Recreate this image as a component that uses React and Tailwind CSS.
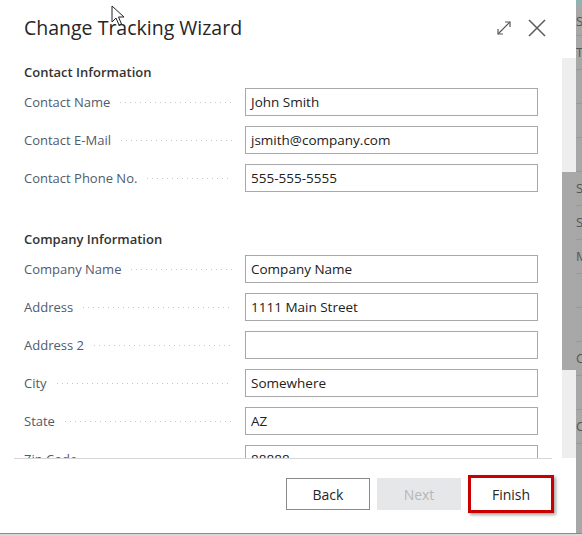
import React from "react";

const font = { fontFamily: '"Segoe UI", "Open Sans", "Noto Sans", sans-serif' };

function Row({ label, value }) {
  return (
    <div className="flex items-center h-[28px]">
      <div className="w-[221px] flex items-center pr-[13px] h-full">
        <span className="text-[13px] text-[#505b6c] whitespace-nowrap mt-[2px]">{label}</span>
        <span className="flex-1 ml-[10px] mt-[2px] h-[2px] bg-[linear-gradient(to_right,#c6c6c6_1px,transparent_1px)] bg-[length:5px_1px] bg-repeat-x"></span>
      </div>
      <div className="w-[293px] h-[28px] border border-[#a8a8a8] flex items-center pl-[5px] text-[13.5px] text-[#212121] whitespace-nowrap overflow-hidden">
        {value}
      </div>
    </div>
  );
}

function Section({ title, children, className = "" }) {
  return (
    <div className={"flex flex-col " + className}>
      <div className="h-[20px] flex items-center pt-[2px] text-[13px] font-semibold text-[#333333]">{title}</div>
      <div className="flex flex-col gap-[10px] mt-[6px]">{children}</div>
    </div>
  );
}

function Cursor() {
  return (
    <svg className="absolute left-[111px] top-[5px]" width="14" height="22" viewBox="0 0 14 22">
      <path d="M1 1 L1 17 L5 13 L8 20 L10.5 19 L7.5 12 L13 12 Z" fill="#fff" stroke="#222" strokeWidth="1" strokeLinejoin="round" />
    </svg>
  );
}

export default function App() {
  return (
    <div className="relative w-[582px] h-[536px] bg-[#a4a4a4] overflow-hidden flex flex-col" style={font}>
      <div className="flex h-[533px]">
        <div className="w-[576px] h-full bg-white flex flex-col">
          {/* header */}
          <div className="h-[58px] flex items-start pl-[24px] pr-[30px] pt-[14px]">
            <div className="flex-1 text-[19.5px] leading-[28px] text-[#262626] font-medium">Change Tracking Wizard</div>
            <div className="flex items-center gap-[16px] pt-[5px]">
              <svg width="16" height="16" viewBox="0 0 16 16" fill="none" stroke="#5a5a5a" strokeWidth="1.2">
                <path d="M2 14 L14 2" />
                <path d="M9 2 H14 V7" />
                <path d="M2 9 V14 H7" />
              </svg>
              <svg width="18" height="18" viewBox="0 0 18 18" fill="none" stroke="#5a5a5a" strokeWidth="1.5">
                <path d="M1 1 L17 17 M17 1 L1 17" />
              </svg>
            </div>
          </div>
          {/* scroll area */}
          <div className="h-[400px] flex">
            <div className="w-[562px] h-full overflow-hidden pl-[24px] pt-[4px]">
              <Section title="Contact Information">
                <Row label="Contact Name" value="John Smith" />
                <Row label="Contact E-Mail" value="jsmith@company.com" />
                <Row label="Contact Phone No." value="555-555-5555" />
              </Section>
              <Section title="Company Information" className="mt-[37px]">
                <Row label="Company Name" value="Company Name" />
                <Row label="Address" value="1111 Main Street" />
                <Row label="Address 2" value="" />
                <Row label="City" value="Somewhere" />
                <Row label="State" value="AZ" />
                <Row label="Zip Code" value="88888" />
              </Section>
            </div>
            <div className="w-[14px] h-full bg-[#eeeeee] flex flex-col">
              <div className="h-[114px]"></div>
              <div className="h-[198px] bg-[#a8a8a8]"></div>
            </div>
          </div>
          {/* footer */}
          <div className="flex-1 flex flex-col">
            <div className="ml-[14px] w-[538px] border-t border-[#d6d6d6]"></div>
            <div className="flex-1 flex items-center justify-end pr-[22px] gap-[7px] pb-[4px]">
              <button className="w-[84px] h-[32px] border border-[#8a8a8a] bg-white text-[14px] text-[#262626]">Back</button>
              <button className="w-[84px] h-[32px] bg-[#e6e7e8] text-[14px] text-[#b4b7bb]">Next</button>
              <button className="w-[86px] h-[38px] border-[3px] border-[#c80000] bg-white text-[14px] text-[#262626] shadow-[2px_2px_3px_rgba(0,0,0,0.35)]">Finish</button>
            </div>
          </div>
        </div>
        {/* background app strip */}
        <div className="w-[6px] h-full flex flex-col overflow-hidden text-[13px] leading-[33px] text-[#555] bg-[#a7a7a7]">
          <div className="h-[6px] bg-[#8fb3b0] shrink-0"></div>
          <div className="border-b border-[#9a9a9a] h-[30px] leading-[30px]">S</div>
          <div className="border-b border-[#9a9a9a] h-[34px]">Te</div>
          <div className="border-b border-[#9a9a9a] h-[34px]"></div>
          <div className="border-b border-[#9a9a9a] h-[34px]"></div>
          <div className="border-b border-[#9a9a9a] h-[34px]"></div>
          <div className="border-b border-[#9a9a9a] h-[34px]">S</div>
          <div className="border-b border-[#9a9a9a] h-[34px]">S</div>
          <div className="border-b border-[#9a9a9a] h-[34px]">M</div>
          <div className="border-b border-[#9a9a9a] h-[34px]"></div>
          <div className="border-b border-[#9a9a9a] h-[34px]"></div>
          <div className="border-b border-[#9a9a9a] h-[34px]">C</div>
          <div className="border-b border-[#9a9a9a] h-[34px]"></div>
          <div className="border-b border-[#9a9a9a] h-[34px]">C</div>
        </div>
      </div>
      <div className="flex-1 bg-[#d8d8d8] border-t border-[#8a8a8a]"></div>
      <Cursor />
    </div>
  );
}
